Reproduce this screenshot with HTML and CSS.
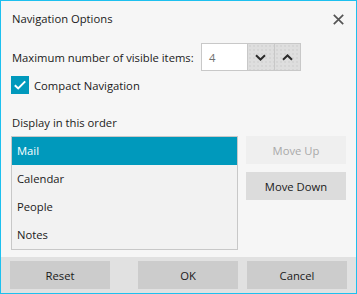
FILE: index.html
```html
<!DOCTYPE html>
<html>
<head>
<meta charset="utf-8">
<link rel="stylesheet" href="styles.css">
</head>
<body>
<div class="window">
  <header class="titlebar">
    <span class="title">Navigation Options</span>
    <button class="close" aria-label="Close">
      <svg width="11" height="11" viewBox="0 0 11 11"><path d="M0.8 0.8L10.2 10.2M10.2 0.8L0.8 10.2" stroke="#555" stroke-width="1.7" fill="none"/></svg>
    </button>
  </header>
  <main class="content">
    <div class="row-max">
      <label class="max-label">Maximum number of visible items:</label>
      <div class="spinner">
        <div class="spin-value">4</div>
        <button class="spin-btn" aria-label="Down">
          <svg width="11" height="7" viewBox="0 0 11 7"><path d="M1 1.2L5.5 5.5L10 1.2" stroke="#2b2b2b" stroke-width="2" fill="none"/></svg>
        </button>
        <button class="spin-btn" aria-label="Up">
          <svg width="11" height="7" viewBox="0 0 11 7"><path d="M1 5.8L5.5 1.5L10 5.8" stroke="#2b2b2b" stroke-width="2" fill="none"/></svg>
        </button>
      </div>
    </div>
    <div class="row-check">
      <span class="checkbox">
        <svg width="18" height="18" viewBox="0 0 18 18"><path d="M3.8 9.2L7.2 12.4L14.2 5.4" stroke="#fff" stroke-width="2" fill="none"/></svg>
      </span>
      <span class="check-label">Compact Navigation</span>
    </div>
    <div class="order-label">Display in this order</div>
    <div class="order-row">
      <ul class="list">
        <li class="item selected">Mail</li>
        <li class="item">Calendar</li>
        <li class="item">People</li>
        <li class="item">Notes</li>
      </ul>
      <div class="side-buttons">
        <button class="btn btn-disabled">Move Up</button>
        <button class="btn btn-side">Move Down</button>
      </div>
    </div>
  </main>
  <footer class="footer">
    <button class="btn btn-foot">Reset</button>
    <button class="btn btn-foot ok">OK</button>
    <button class="btn btn-foot">Cancel</button>
  </footer>
</div>
</body>
</html>
```

FILE: styles.css
```css
* { box-sizing: border-box; }
html, body { margin: 0; padding: 0; }
body {
  font-family: "Open Sans", "Noto Sans", sans-serif;
  font-size: 11.25px;
  color: #1a1a1a;
  background: #f6f6f6;
}
.window {
  width: 357px;
  height: 294px;
  border: 1px solid #1dc0ef;
  background: #f6f6f6;
  display: flex;
  flex-direction: column;
}
.titlebar {
  height: 36px;
  flex: none;
  display: flex;
  align-items: center;
  justify-content: space-between;
  padding: 0 12px 0 11px;
}
.title { line-height: 16px; }
.close {
  border: 0;
  background: transparent;
  padding: 0;
  width: 11px;
  height: 11px;
  display: flex;
}
.content {
  padding: 6px 0 0 10px;
  display: flex;
  flex-direction: column;
}
.row-max {
  height: 28px;
  display: flex;
  align-items: center;
}
.max-label {
  width: 190px;
  padding-left: 1px;
}
.spinner {
  width: 100px;
  height: 28px;
  border: 1px solid #c8c8c8;
  display: flex;
}
.spin-value {
  width: 45px;
  background: #fff;
  color: #707070;
  padding-left: 7px;
  display: flex;
  align-items: center;
}
.spin-btn {
  flex: 1;
  border: 0;
  border-left: 1px solid #c8c8c8;
  padding: 0;
  background-color: #dedede;
  background-image: radial-gradient(circle, #cbcbcb 0.6px, transparent 0.8px);
  background-size: 4px 4px;
  display: flex;
  align-items: center;
  justify-content: center;
}
.row-check {
  margin-top: 5px;
  height: 18px;
  display: flex;
  align-items: center;
}
.checkbox {
  width: 18px;
  height: 18px;
  background: #0099bc;
  display: flex;
}
.check-label { margin-left: 5px; }
.order-label {
  margin-top: 21px;
  height: 16px;
  line-height: 16px;
  padding-left: 1px;
}
.order-row {
  margin-top: 5px;
  display: flex;
  align-items: flex-start;
}
.list {
  list-style: none;
  margin: 0;
  padding: 0;
  width: 227px;
  height: 114px;
  border: 1px solid #c8c8c8;
  background: #f2f2f2;
}
.item {
  height: 28px;
  line-height: 28px;
  padding-left: 5px;
}
.item.selected {
  background: #0099bc;
  color: #fff;
}
.side-buttons {
  margin-left: 8px;
  display: flex;
  flex-direction: column;
  gap: 8px;
}
.btn {
  font-family: inherit;
  font-size: 11.25px;
  width: 100px;
  height: 28px;
  border: 0;
  padding: 0;
  color: #1a1a1a;
}
.btn-disabled {
  background: #efefef;
  color: #a9a9a9;
}
.btn-side { background: #dcdcdc; }
.footer {
  margin-top: auto;
  height: 36px;
  flex: none;
  background: #e1e1e1;
  display: flex;
  align-items: center;
  gap: 9px;
  padding: 0 9px;
}
.btn-foot { background: #cccccc; }
.ok { margin-left: auto; }
```
